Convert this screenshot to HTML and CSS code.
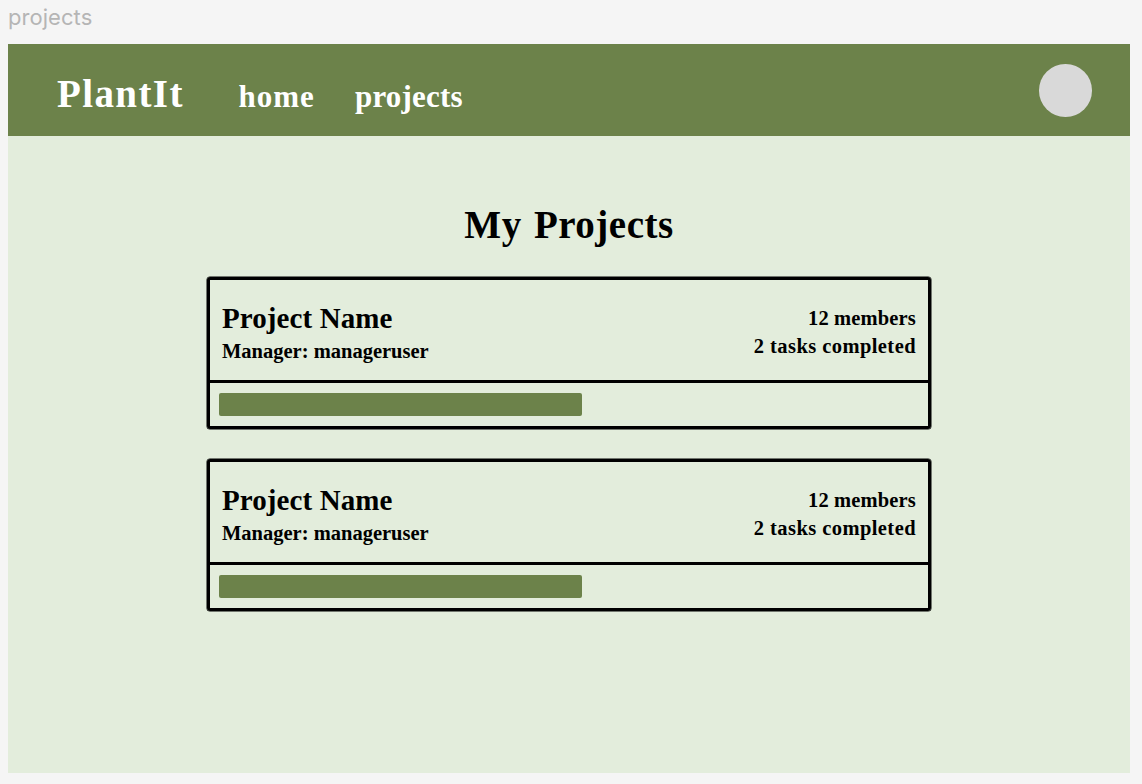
FILE: index.html
```html
<!DOCTYPE html>
<html lang="en">
<head>
<meta charset="utf-8">
<title>PlantIt – projects</title>
<link rel="stylesheet" href="styles.css">
</head>
<body>
<div class="frame-label">projects</div>
<div class="frame">
  <header class="navbar">
    <span class="brand">PlantIt</span>
    <nav class="links">
      <a class="link link-home">home</a>
      <a class="link link-projects">projects</a>
    </nav>
    <div class="avatar"></div>
  </header>
  <main class="content">
    <h1 class="title">My Projects</h1>
    <section class="card">
      <div class="card-info">
        <div class="summary">
          <h2 class="name">Project Name</h2>
          <div class="manager">Manager: manageruser</div>
        </div>
        <div class="stats">
          <div class="members">12 members</div>
          <div class="tasks">2 tasks completed</div>
        </div>
      </div>
      <div class="progress"><div class="bar"></div></div>
    </section>
    <section class="card">
      <div class="card-info">
        <div class="summary">
          <h2 class="name">Project Name</h2>
          <div class="manager">Manager: manageruser</div>
        </div>
        <div class="stats">
          <div class="members">12 members</div>
          <div class="tasks">2 tasks completed</div>
        </div>
      </div>
      <div class="progress"><div class="bar"></div></div>
    </section>
  </main>
</div>
</body>
</html>
```

FILE: styles.css
```css
* { box-sizing: border-box; }
body {
  margin: 0;
  height: 784px;
  overflow: hidden;
  background: #f5f5f5;
  font-family: "Liberation Serif", serif;
  font-weight: 700;
  color: #000;
}
.frame-label {
  height: 44px;
  padding: 4px 0 0 8px;
  font: 400 22px/26px Inter, sans-serif;
  letter-spacing: 0.05px;
  color: #b5b5b5;
}
.frame {
  width: 1122px;
  height: 729px;
  margin-left: 8px;
  background: #e3eddc;
}
.navbar {
  display: flex;
  align-items: flex-start;
  height: 92.4px;
  padding: 20px 38px 0 49px;
  background: #6c824a;
  color: #fff;
}
.brand {
  width: 181.5px;
  padding-top: 8px;
  font-size: 39px;
  line-height: 44px;
  letter-spacing: 1.4px;
}
.links {
  display: flex;
  flex: 1;
  padding-top: 16px;
  font-size: 31px;
  line-height: 34px;
}
.link-home { width: 116.5px; letter-spacing: 1px; }
.link-projects { letter-spacing: 0.2px; }
.avatar {
  width: 52.6px;
  height: 52.6px;
  border-radius: 50%;
  background: #d9d9d9;
}
.content {
  display: flex;
  flex-direction: column;
  align-items: center;
  padding-top: 66.6px;
}
.title {
  margin: 0 0 30px;
  font-size: 39px;
  line-height: 44px;
  letter-spacing: 0.5px;
  word-spacing: 2px;
}
.card {
  width: 724px;
  height: 152px;
  margin-bottom: 30px;
  border: 3px solid #000;
  border-radius: 3px;
  box-shadow: 0 0 0 0.5px #000;
}
.card-info {
  display: flex;
  justify-content: space-between;
  height: 103px;
  padding: 22px 12px 0;
  border-bottom: 3px solid #000;
}
.name {
  margin: 0;
  font-size: 29px;
  line-height: 33px;
  letter-spacing: 0.1px;
}
.manager {
  padding-top: 4px;
  font-size: 20.5px;
  line-height: 24px;
}
.stats {
  padding-top: 2px;
  font-size: 20.5px;
  line-height: 28px;
  text-align: right;
}
.members { letter-spacing: 0.15px; }
.tasks { letter-spacing: 0.43px; }
.progress { padding: 10px 9px; }
.bar {
  width: 363px;
  height: 23px;
  border-radius: 2px;
  background: #6c824a;
}
```
